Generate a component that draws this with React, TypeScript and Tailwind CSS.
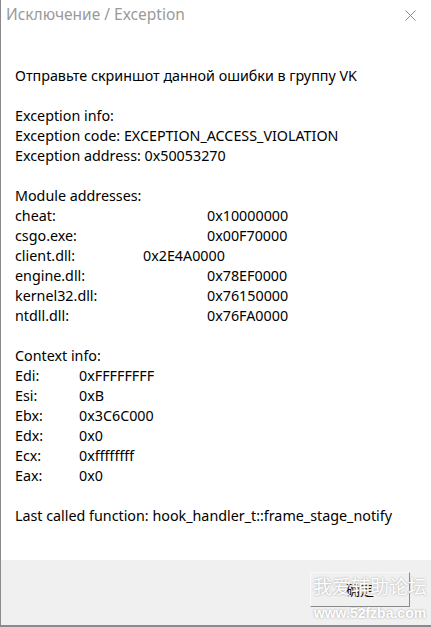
import React from "react";

const font = { fontFamily: '"Noto Sans", "Noto Sans CJK SC", sans-serif' };

function Row({ label, value, w }: { label: string; value: string; w: string }) {
  return (
    <div className="flex h-[20px] items-center">
      <span className={w}>{label}</span>
      <span>{value}</span>
    </div>
  );
}

export default function App() {
  const modules: [string, string, string][] = [
    ["cheat:", "0x10000000", "w-[192px]"],
    ["csgo.exe:", "0x00F70000", "w-[192px]"],
    ["client.dll:", "0x2E4A0000", "w-[128px]"],
    ["engine.dll:", "0x78EF0000", "w-[192px]"],
    ["kernel32.dll:", "0x76150000", "w-[192px]"],
    ["ntdll.dll:", "0x76FA0000", "w-[192px]"],
  ];
  const ctx: [string, string][] = [
    ["Edi:", "0xFFFFFFFF"],
    ["Esi:", "0xB"],
    ["Ebx:", "0x3C6C000"],
    ["Edx:", "0x0"],
    ["Ecx:", "0xffffffff"],
    ["Eax:", "0x0"],
  ];
  return (
    <div
      className="relative flex h-[627px] w-[431px] flex-col overflow-hidden border-l border-b-2 border-[#8a8a8a] bg-white"
      style={font}
    >
      <div className="flex h-[30px] items-center justify-between pl-[5px] pr-[15px]">
        <span className="text-[15.5px] text-[#9a9a9a]">Исключение / Exception</span>
        <svg width="11" height="11" viewBox="0 0 11 11">
          <path d="M0.5 0.5L10.5 10.5M10.5 0.5L0.5 10.5" stroke="#8a8a8a" strokeWidth="1" />
        </svg>
      </div>
      <div className="flex-1 pl-[14px] pt-[36px] text-[14.3px] leading-[20px] text-black">
        <div className="h-[20px]">Отправьте скриншот данной ошибки в группу VK</div>
        <div className="h-[20px]" />
        <div className="h-[20px]">Exception info:</div>
        <div className="h-[20px]">Exception code: EXCEPTION_ACCESS_VIOLATION</div>
        <div className="h-[20px]">Exception address: 0x50053270</div>
        <div className="h-[20px]" />
        <div className="h-[20px]">Module addresses:</div>
        {modules.map(([l, v, w]) => (
          <Row key={l} label={l} value={v} w={w} />
        ))}
        <div className="h-[20px]" />
        <div className="h-[20px]">Context info:</div>
        {ctx.map(([l, v]) => (
          <Row key={l} label={l} value={v} w="w-[64px]" />
        ))}
        <div className="h-[20px]" />
        <div className="h-[20px]">Last called function: hook_handler_t::frame_stage_notify</div>
      </div>
      <div className="flex h-[65px] items-start justify-end bg-[#f0f0f0] pr-[21px] pt-[12px]">
        <button className="flex h-[35px] w-[100px] items-center justify-center border border-t-[#fafafa] border-l-[#fafafa] border-r-[#8a8a8a] border-b-[#8a8a8a] bg-[#f0f0f0] text-[14px] text-black">
          确定
        </button>
      </div>
      <div className="pointer-events-none absolute left-[311px] top-[578px] flex w-[116px] flex-col items-center whitespace-nowrap leading-none text-white">
        <span className="text-[19px] [text-shadow:0_0_2px_#999]">我爱辅助论坛</span>
        <span
          className="mt-[9px] text-[14px] font-bold [text-shadow:0_0_2px_#999]"
          style={{ fontFamily: '"Liberation Sans", sans-serif' }}
        >
          www.52fzba.com
        </span>
      </div>
    </div>
  );
}
